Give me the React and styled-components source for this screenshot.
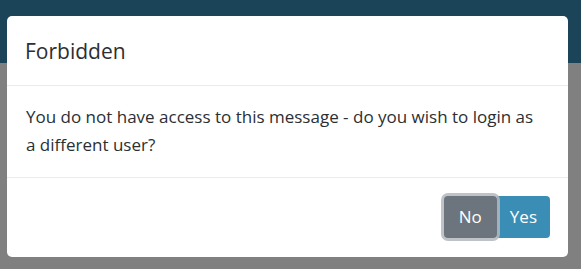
import React from 'react'
import styled, { createGlobalStyle } from 'styled-components'

const GlobalStyle = createGlobalStyle`
  html, body {
    margin: 0;
    padding: 0;
  }
  body {
    background: #808080;
    font-family: "Segoe UI", "Open Sans", "Noto Sans", sans-serif;
    overflow: hidden;
  }
`

const Page = styled.div`
  position: relative;
  width: 581px;
  height: 269px;
  background: #808080;
`

const Navbar = styled.div`
  height: 63px;
  background: #1c4459;
`

const Backdrop = styled.div`
  position: absolute;
  inset: 0;
  padding: 16px 0 0 7px;
`

const Modal = styled.div`
  width: 561px;
  background: #fff;
  border-radius: 5px;
  overflow: hidden;
  color: #212529;
`

const Header = styled.div`
  padding: 18px 18px 17px;
  border-bottom: 1px solid #e9ecef;
`

const Title = styled.h5`
  margin: 0;
  font-size: 21px;
  font-weight: 400;
  line-height: 34px;
  color: #2b2f33;
`

const Body = styled.div`
  padding: 17px 32px 18px 19px;
  font-size: 17px;
  line-height: 28px;
  letter-spacing: 0;
  color: #2b2f33;
`

const Footer = styled.div`
  display: flex;
  justify-content: flex-end;
  padding: 18px 18px 19px;
  border-top: 1px solid #e9ecef;
`

const Button = styled.button`
  position: relative;
  z-index: ${(p) => (p.$focused ? 1 : 0)};
  height: 42px;
  padding: 0 ${(p) => p.$pad}px;
  border: none;
  border-radius: ${(p) => (p.$joined ? '0 4px 4px 0' : '4px')};
  background: ${(p) => p.$bg};
  color: #fff;
  font-family: inherit;
  font-size: 17px;
  line-height: 42px;
  box-shadow: ${(p) => (p.$focused ? '0 0 0 3px rgba(180, 184, 190, 0.85)' : 'none')};
`

export default function App() {
  return (
    <>
      <GlobalStyle />
      <Page>
        <Navbar />
        <Backdrop>
          <Modal>
            <Header>
              <Title>Forbidden</Title>
            </Header>
            <Body>
              You do not have access to this message - do you wish to login as a different user?
            </Body>
            <Footer>
              <Button $bg="#6c757d" $pad={15} $focused>No</Button>
              <Button $bg="#3a8db5" $pad={13} $joined>Yes</Button>
            </Footer>
          </Modal>
        </Backdrop>
      </Page>
    </>
  )
}
